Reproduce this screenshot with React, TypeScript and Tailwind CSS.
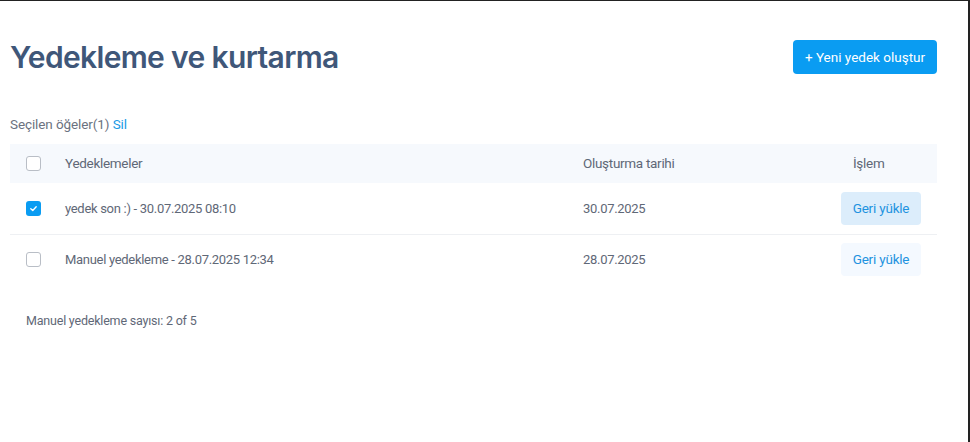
import React from "react";

function Box({ checked }: { checked?: boolean }) {
  if (checked) {
    return (
      <span className="flex h-[15px] w-[15px] items-center justify-center rounded-[3px] bg-[#0a9cf2]">
        <svg width="9" height="9" viewBox="0 0 10 10" fill="none">
          <path d="M2 5.2 L4.2 7.2 L8 3" stroke="white" strokeWidth="1.5" strokeLinecap="round" strokeLinejoin="round" />
        </svg>
      </span>
    );
  }
  return <span className="block h-[15px] w-[15px] rounded-[3px] border border-[#b9bec6] bg-white" />;
}

const rows = [
  { name: "yedek son :) - 30.07.2025 08:10", date: "30.07.2025", checked: true },
  { name: "Manuel yedekleme - 28.07.2025 12:34", date: "28.07.2025", checked: false },
];

export default function App() {
  return (
    <div
      className="h-[442px] w-[970px] overflow-hidden border-t border-r-2 border-[#222] bg-white"
      style={{ fontFamily: "Roboto, 'Noto Sans', sans-serif" }}
    >
      <div className="w-[927px] pl-[10px] box-content">
        <div className="flex items-center justify-between pt-[38px]">
          <h1
            className="text-[30px] font-semibold leading-[36px] tracking-[-0.65px] text-[#3f5779]"
            style={{ fontFamily: "Inter, sans-serif" }}
          >
            Yedekleme ve kurtarma
          </h1>
          <button className="h-[34px] w-[144px] rounded-[4px] bg-[#0a9cf2] text-[13.5px] text-white">
            + Yeni yedek oluştur
          </button>
        </div>
        <div className="mt-[40px] text-[13.5px] leading-[18px] tracking-[-0.1px] text-[#6b7280]">
          Seçilen öğeler(1) <span className="text-[#1a9be6]">Sil</span>
        </div>
        <div className="mt-[11px] grid grid-cols-[55px_518px_258px_96px] text-[13px] tracking-[-0.3px] text-[#5f6877]">
          <div className="flex h-[39px] items-center bg-[#f6f9fd] pl-[16px]">
            <Box />
          </div>
          <div className="flex h-[39px] items-center bg-[#f6f9fd] text-[13.5px]">Yedeklemeler</div>
          <div className="flex h-[39px] items-center bg-[#f6f9fd] text-[13.5px]">Oluşturma tarihi</div>
          <div className="flex h-[39px] items-center bg-[#f6f9fd] pl-[12px] text-[13.5px]">İşlem</div>
          {rows.map((r, i) => {
            const cell = i === 0 ? "h-[52px] border-b border-[#eef0f3]" : "h-[49px]";
            return (
              <React.Fragment key={i}>
                <div className={`flex items-center pl-[16px] ${cell}`}>
                  <Box checked={r.checked} />
                </div>
                <div className={`flex items-center ${cell}`}>{r.name}</div>
                <div className={`flex items-center ${cell}`}>{r.date}</div>
                <div className={`flex items-center ${cell}`}>
                  <button
                    className={`h-[33px] w-[80px] rounded-[4px] text-[13.5px] tracking-[-0.2px] text-[#1e93e0] ${
                      r.checked ? "bg-[#dcedfb]" : "bg-[#f4f9ff]"
                    }`}
                  >
                    Geri yükle
                  </button>
                </div>
              </React.Fragment>
            );
          })}
        </div>
        <div className="mt-[28px] pl-[16px] text-[12.5px] tracking-[-0.2px] text-[#5f6877]">Manuel yedekleme sayısı: 2 of 5</div>
      </div>
    </div>
  );
}
